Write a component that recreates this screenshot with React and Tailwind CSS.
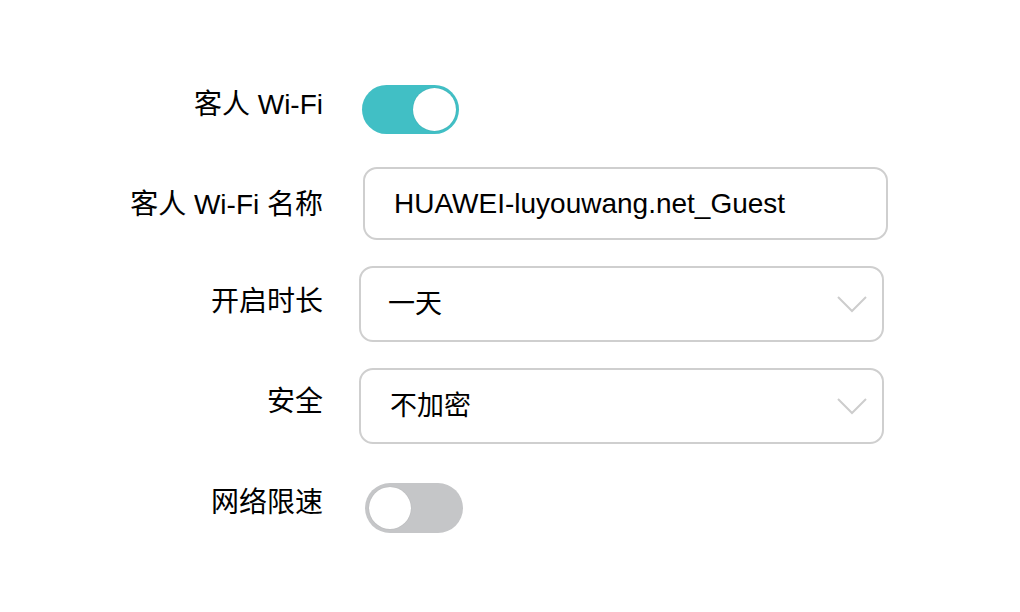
export default function App() {
  const font = { fontFamily: '"Liberation Sans", "Noto Sans CJK SC", sans-serif' };
  const Chevron = () => (
    <svg width="32" height="18" viewBox="0 0 32 18" fill="none" className="shrink-0">
      <path d="M2 2 L16 16 L30 2" stroke="#cdcdcd" strokeWidth="2" />
    </svg>
  );
  return (
    <div className="w-[1020px] h-[612px] bg-white text-black overflow-hidden" style={font}>
      <div className="flex flex-col pt-[85px]">
        {/* row 1 */}
        <div className="flex items-center h-[49px]">
          <div className="w-[323px] text-right text-[28px] leading-none mb-[9px]">客人 Wi-Fi</div>
          <div className="ml-[39px] w-[97px] h-[49px] rounded-full bg-[#41bfc5] flex items-center justify-end pr-[3px]">
            <div className="w-[43px] h-[43px] rounded-full bg-white shadow-[0_0_1px_rgba(0,0,0,0.2)]" />
          </div>
        </div>
        {/* row 2 */}
        <div className="flex items-center h-[73px] mt-[33px]">
          <div className="w-[323px] text-right text-[28px] leading-none mt-[2px]">客人 Wi-Fi 名称</div>
          <div className="ml-[40px] w-[525px] h-[73px] rounded-[14px] border-2 border-[#cfcfcf] flex items-center pl-[29px] text-[28px]">
            HUAWEI-luyouwang.net_Guest
          </div>
        </div>
        {/* row 3 */}
        <div className="flex items-center h-[76px] mt-[26px]">
          <div className="w-[323px] text-right text-[28px] leading-none mb-[4px]">开启时长</div>
          <div className="ml-[36px] w-[525px] h-[76px] rounded-[14px] border-2 border-[#cfcfcf] flex items-center justify-between pl-[27px] pr-[14px] text-[27px]">
            <span>一天</span>
            <Chevron />
          </div>
        </div>
        {/* row 4 */}
        <div className="flex items-center h-[76px] mt-[26px]">
          <div className="w-[323px] text-right text-[28px] leading-none mb-[8px]">安全</div>
          <div className="ml-[36px] w-[525px] h-[76px] rounded-[14px] border-2 border-[#cfcfcf] flex items-center justify-between pl-[29px] pr-[14px] text-[27px]">
            <span>不加密</span>
            <Chevron />
          </div>
        </div>
        {/* row 5 */}
        <div className="flex items-center h-[50px] mt-[39px]">
          <div className="w-[323px] text-right text-[28px] leading-none mb-[10px]">网络限速</div>
          <div className="ml-[42px] w-[98px] h-[50px] rounded-full bg-[#c5c6c8] flex items-center pl-[4px]">
            <div className="w-[42px] h-[42px] rounded-full bg-white shadow-[0_0_1px_rgba(0,0,0,0.2)]" />
          </div>
        </div>
      </div>
    </div>
  );
}
